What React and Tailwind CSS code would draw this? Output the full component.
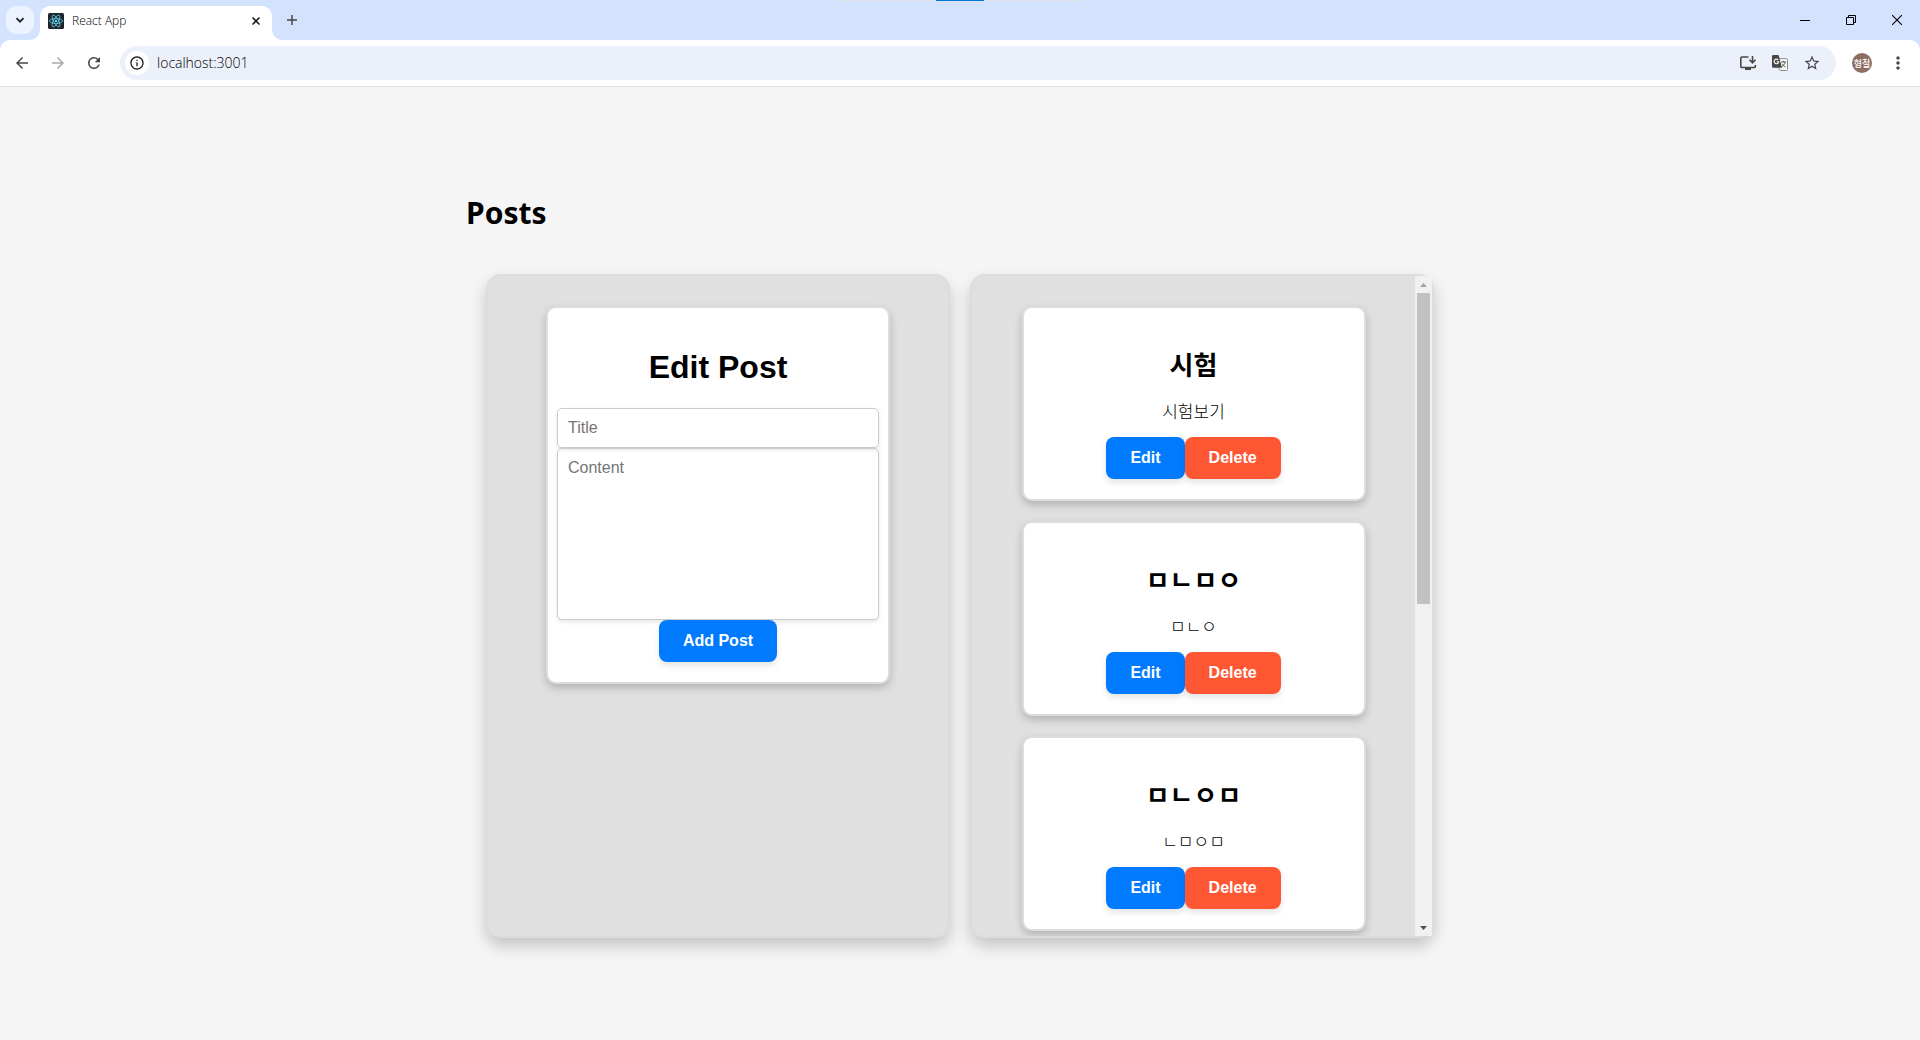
import React, { useState } from 'react';
import {
  MdArrowBack,
  MdArrowForward,
  MdRefresh,
  MdInfoOutline,
  MdStarBorder,
  MdMoreVert,
} from 'react-icons/md';

const POSTS = [
  { id: 1, title: '시험', content: '시험보기' },
  { id: 2, title: 'ㅁㄴㅁㅇ', content: 'ㅁㄴㅇ' },
  { id: 3, title: 'ㅁㄴㅇㅁ', content: 'ㄴㅁㅇㅁ' },
];

function ReactFavicon() {
  return (
    <svg viewBox="0 0 16 16" className="size-4 shrink-0" aria-hidden="true">
      <rect width="16" height="16" rx="1.5" fill="#20232a" />
      <g fill="none" stroke="#61dafb" strokeWidth="0.75">
        <ellipse cx="8" cy="8" rx="6.6" ry="2.5" />
        <ellipse cx="8" cy="8" rx="6.6" ry="2.5" transform="rotate(60 8 8)" />
        <ellipse cx="8" cy="8" rx="6.6" ry="2.5" transform="rotate(120 8 8)" />
      </g>
      <circle cx="8" cy="8" r="1.3" fill="#61dafb" />
    </svg>
  );
}

function TranslateIcon() {
  return (
    <svg viewBox="0 0 16 16" className="size-4" fill="none" aria-hidden="true">
      <path d="M6.500 3.700h8a1 1 0 0 1 1 1v9.800a1 1 0 0 1-1 1H8.300L6.800 12.800" fill="#fff" stroke="#8a8a8a" />
      <path d="M9 7h5.200M11.600 5.800V7M13.200 7c-.5 2.200-1.800 3.800-3.600 5M10.200 8.600c.7 1.500 1.800 2.700 3.300 3.500" stroke="#474747" strokeWidth="0.9" />
      <path d="M1.200 0h4.600a1 1 0 0 1 1 .8L10 12.800H1.200A1.200 1.200 0 0 1 0 11.600V1.200A1.200 1.200 0 0 1 1.200 0Z" fill="#474747" />
      <path d="M6.200 4.900A2.300 2.300 0 1 0 6.700 6.800H4.700" stroke="#fff" strokeWidth="1.100" />
    </svg>
  );
}

function InstallIcon() {
  return (
    <svg viewBox="0 0 18 18" className="size-[18px]" fill="none" stroke="currentColor" strokeWidth="1.6" aria-hidden="true">
      <path d="M9.500 3H3a1.200 1.200 0 0 0-1.200 1.200v8.100A1.200 1.200 0 0 0 3 13.500h12.200a1.200 1.200 0 0 0 1.200-1.200V11" />
      <path d="M13.500 2v6.500M10.500 5.800l3 3 3-3" />
      <path d="M6 15h6" strokeWidth="2" />
    </svg>
  );
}

function TabFoot({ flip }) {
  return (
    <svg viewBox="0 0 10 10" className="size-2.5 shrink-0 self-end" aria-hidden="true">
      <path d={flip ? 'M0 0A10 10 0 0 0 10 10H0Z' : 'M10 0A10 10 0 0 1 0 10H10Z'} fill="#fff" />
    </svg>
  );
}

function TabStrip() {
  return (
    <div className="relative flex h-10 items-center bg-[#d3e3fd]">
      <div className="absolute inset-x-0 top-0 mx-auto flex h-px w-[242px] justify-center bg-[#e3e4e6]">
        <span className="w-12 bg-[#0078d7]" />
      </div>
      <button
        aria-label="Search tabs"
        className="ml-1.5 flex size-7 items-center justify-center rounded-[10px] bg-[#ecf3fe] text-[#1f1f1f]"
      >
        <svg viewBox="0 0 10 10" className="size-2.5" fill="none" stroke="currentColor" strokeWidth="1.8" aria-hidden="true">
          <path d="M1.5 3.2 5 6.7 8.5 3.2" />
        </svg>
      </button>
      <div className="-ml-1 flex h-full pt-1.5">
        <TabFoot />
        <div className="flex w-58 items-center rounded-t-[10px] bg-white pr-2.5 pb-1 pl-2">
          <ReactFavicon />
          <span className="ml-2 flex-1 text-xs text-black">React App</span>
          <button aria-label="Close tab" className="flex size-3 items-center justify-center text-[#1f1f1f]">
            <svg viewBox="0 0 10 10" className="size-2.5" fill="none" stroke="currentColor" strokeWidth="1.6" aria-hidden="true">
              <path d="M1.5 1.5l7 7M8.5 1.5l-7 7" />
            </svg>
          </button>
        </div>
        <TabFoot flip />
      </div>
      <button aria-label="New tab" className="ml-0.5 flex size-4 items-center justify-center text-[#474747]">
        <svg viewBox="0 0 12 12" className="size-3" fill="none" stroke="currentColor" strokeWidth="1.5" aria-hidden="true">
          <path d="M6 1v10M1 6h10" />
        </svg>
      </button>
      <div className="ml-auto flex text-black">
        <button aria-label="Minimize" className="flex w-[46px] items-center justify-center">
          <svg viewBox="0 0 10 10" className="size-2.5" stroke="currentColor" aria-hidden="true">
            <path d="M0 5.5h10" />
          </svg>
        </button>
        <button aria-label="Restore" className="flex w-[46px] items-center justify-center">
          <svg viewBox="0 0 10 10" className="size-2.5" fill="none" stroke="currentColor" aria-hidden="true">
            <path d="M.5 2.5h7v7h-7zM2.5 2.5v-2h7v7h-2" />
          </svg>
        </button>
        <button aria-label="Close" className="flex w-[46px] items-center justify-center">
          <svg viewBox="0 0 10 10" className="size-2.5" fill="none" stroke="currentColor" strokeWidth="1.1" aria-hidden="true">
            <path d="M0 0l10 10M10 0L0 10" />
          </svg>
        </button>
      </div>
    </div>
  );
}

function AddressBar() {
  const [url, setUrl] = useState('localhost:3001');
  return (
    <div className="bg-[#d3e3fd]">
      <div className="flex h-[47px] items-center rounded-t-[10px] border-b border-[#dedfe1] bg-white px-3 text-[#474747]">
        <button aria-label="Back" className="flex w-5 justify-center"><MdArrowBack size={18} /></button>
        <button aria-label="Forward" className="ml-4 flex w-5 justify-center text-[#a9a9a9]"><MdArrowForward size={18} /></button>
        <button aria-label="Reload" className="ml-4 flex w-5 justify-center"><MdRefresh size={18} /></button>
        <div className="ml-4 flex h-[34px] flex-1 items-center rounded-full bg-[#ecf0fa] pr-[15px] pl-[5px]">
          <button aria-label="Site information" className="flex size-6 items-center justify-center rounded-full bg-white text-[#1f1f1f]">
            <MdInfoOutline size={16} />
          </button>
          <input
            aria-label="Address"
            value={url}
            onChange={(e) => setUrl(e.target.value)}
            className="ml-2 min-w-0 flex-1 bg-transparent text-sm text-black outline-none"
          />
          <button aria-label="Install app" className="flex size-[18px] items-center justify-center">
            <InstallIcon />
          </button>
          <button aria-label="Translate this page" className="ml-3.5 flex size-[18px] items-center justify-center">
            <TranslateIcon />
          </button>
          <button aria-label="Bookmark this tab" className="ml-3.5 flex size-[18px] items-center justify-center">
            <MdStarBorder size={18} />
          </button>
        </div>
        <button
          aria-label="Profile"
          className="ml-4 flex size-5 items-center justify-center rounded-full bg-[#8d6e63] font-['Noto_Sans_CJK_KR',sans-serif] text-[9px] leading-none font-medium whitespace-nowrap text-white"
        >
          형철
        </button>
        <button aria-label="Menu" className="ml-4 flex w-5 justify-center"><MdMoreVert size={20} /></button>
      </div>
    </div>
  );
}

function Card({ children }) {
  return (
    <div className="flex w-full max-w-[344px] shrink-0 flex-col items-center rounded-[10px] border-2 border-[#ddd] bg-white px-[9px] py-5 shadow-[0_4px_8px_rgba(0,0,0,0.2)]">
      {children}
    </div>
  );
}

function ActionButton({ danger, children }) {
  return (
    <button
      className={
        (danger ? 'bg-[#ff5733]' : 'bg-[#007bff]') +
        ' rounded-lg px-6 py-3 text-base leading-[18px] font-bold text-white shadow-[0_4px_6px_rgba(0,0,0,0.1)]'
      }
    >
      {children}
    </button>
  );
}

function PostForm() {
  return (
    <Card>
      <h2 className="mt-[21px] mb-[22px] text-[32px] leading-[37px] font-bold">Edit Post</h2>
      <input
        aria-label="Title"
        placeholder="Title"
        className="h-10 w-full rounded-[5px] border border-[#ccc] px-2.5 text-base shadow-[0_2px_4px_rgba(0,0,0,0.1)] outline-none placeholder:text-[#757575]"
      />
      <textarea
        aria-label="Content"
        placeholder="Content"
        className="h-[172px] w-full resize-none rounded-[5px] border border-[#ccc] p-2.5 text-base leading-[18px] shadow-[0_2px_4px_rgba(0,0,0,0.1)] outline-none placeholder:text-[#757575]"
      />
      <ActionButton>Add Post</ActionButton>
    </Card>
  );
}

function PostCard({ post }) {
  return (
    <Card>
      <h2 className="mt-[22px] text-[26px] leading-8 font-bold">{post.title}</h2>
      <p className="mt-[18px] mb-3 text-[17px] leading-[25px] font-light">{post.content}</p>
      <div className="flex">
        <ActionButton>Edit</ActionButton>
        <ActionButton danger>Delete</ActionButton>
      </div>
    </Card>
  );
}

function ScrollBar() {
  return (
    <div className="flex w-[17px] shrink-0 flex-col bg-[#f1f1f1]" aria-hidden="true">
      <div className="flex h-[17px] items-center justify-center">
        <svg viewBox="0 0 7 4" className="h-1 w-[7px]" fill="#a3a3a3"><path d="M0 4 3.5 0 7 4Z" /></svg>
      </div>
      <div className="flex-1 px-0.5">
        <div className="h-[311px] bg-[#c1c1c1]" />
      </div>
      <div className="flex h-[17px] items-center justify-center">
        <svg viewBox="0 0 7 4" className="h-1 w-[7px]" fill="#505050"><path d="M0 0 3.5 4 7 0Z" /></svg>
      </div>
    </div>
  );
}

const PANEL = 'flex h-[664px] rounded-[15px] border-2 border-[#ddd] bg-[#e0e0e0] shadow-[0_8px_16px_rgba(0,0,0,0.2)]';

export default function App() {
  return (
    <div className="flex min-h-screen flex-col bg-[#f5f5f5] font-['Liberation_Sans','Noto_Sans_CJK_KR',sans-serif] text-black">
      <header className="font-['Open_Sans','Noto_Sans_CJK_KR',sans-serif] font-light">
        <TabStrip />
        <AddressBar />
      </header>
      <main className="mx-auto w-full max-w-[988px] pt-[105px] pb-20">
        <h1 className="font-['Noto_Sans','Open_Sans',sans-serif] text-[30px] leading-[42px] font-bold">Posts</h1>
        <div className="mt-10 grid grid-cols-2 gap-5 px-5">
          <section aria-label="Post editor" className={PANEL + ' flex-col items-center p-[30px]'}>
            <PostForm />
          </section>
          <section aria-label="Post list" className={PANEL}>
            <div className="flex flex-1 flex-col items-center gap-5 overflow-y-auto px-[30px] pt-[30px] [scrollbar-width:none]">
              {POSTS.map((post) => (
                <PostCard key={post.id} post={post} />
              ))}
            </div>
            <ScrollBar />
          </section>
        </div>
      </main>
    </div>
  );
}
